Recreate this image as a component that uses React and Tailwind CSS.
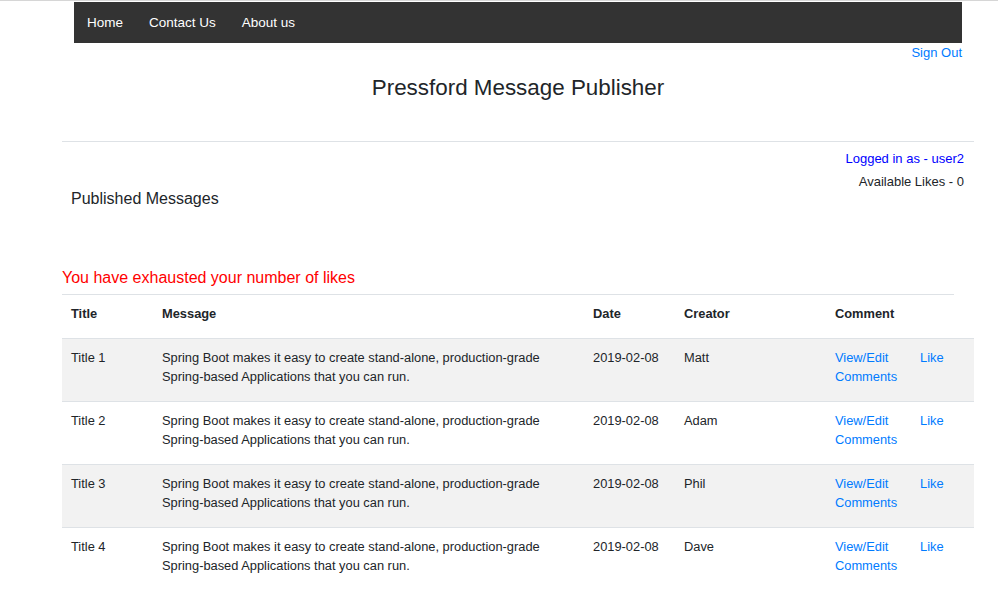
const rows = [
  { title: "Title 1", creator: "Matt" },
  { title: "Title 2", creator: "Adam" },
  { title: "Title 3", creator: "Phil" },
  { title: "Title 4", creator: "Dave" },
];

const message =
  "Spring Boot makes it easy to create stand-alone, production-grade Spring-based Applications that you can run.";

export default function App() {
  return (
    <div className="min-h-screen bg-white font-['Liberation_Sans',Arial,sans-serif] text-[13px] text-[#212529]">
      <div className="h-px bg-[#d6d6d6]" />
      <div className="ml-[62px] w-[912px] pt-px">
        <nav className="mx-3 flex h-[41px] items-center bg-[#333333] text-[13.5px]">
          {["Home", "Contact Us", "About us"].map((item) => (
            <a key={item} href="#" className="px-[13px] leading-[20px] text-white">
              {item}
            </a>
          ))}
        </nav>

        <div className="pr-3 text-right leading-[20px]">
          <a href="#" className="text-[#007bff]">Sign Out</a>
        </div>

        <h1 className="mt-[12px] text-center text-[22.4px] leading-[26px]">Pressford Message Publisher</h1>

        <div className="mt-[40px] h-px bg-[#dee2e6]" />

        <div className="flex items-start justify-between">
          <div className="pl-[9px] pt-[46px] text-[16px] leading-[22px]">Published Messages</div>
          <div className="pr-[10px] pt-[5px] text-right leading-[23px]">
            <div className="text-[#0000ff]">Logged in as - user2</div>
            <div>Available Likes - 0</div>
          </div>
        </div>

        <div className="mt-[57px] text-[16px] leading-[22px] text-[#ff0000]">
          You have exhausted your number of likes
        </div>

        <div className="mt-[5px] h-px w-[892px] bg-[#dee2e6]" />
        <table className="w-[912px] table-fixed border-collapse text-left text-[12.85px] leading-[19px]">
          <colgroup>
            <col className="w-[91px]" />
            <col className="w-[431px]" />
            <col className="w-[91px]" />
            <col className="w-[151px]" />
            <col className="w-[85px]" />
            <col className="w-[63px]" />
          </colgroup>
          <thead>
            <tr className="font-bold">
              <th className="pb-[15px] pl-[9px] pt-[9px] align-top">Title</th>
              <th className="pb-[15px] pl-[9px] pt-[9px] align-top">Message</th>
              <th className="pb-[15px] pl-[9px] pt-[9px] align-top">Date</th>
              <th className="pb-[15px] pl-[9px] pt-[9px] align-top">Creator</th>
              <th className="pb-[15px] pl-[9px] pt-[9px] align-top">Comment</th>
              <th className="pb-[15px] pl-[9px] pt-[9px] align-top"></th>
            </tr>
          </thead>
          <tbody>
            {rows.map((row, i) => (
              <tr key={row.title} className={`border-t border-[#dee2e6] ${i % 2 === 0 ? "bg-[#f2f2f2]" : "bg-white"}`}>
                <td className="pb-[15px] pl-[9px] pt-[9px] align-top">{row.title}</td>
                <td className="pb-[15px] pl-[9px] pt-[9px] align-top">{message}</td>
                <td className="pb-[15px] pl-[9px] pt-[9px] align-top">2019-02-08</td>
                <td className="pb-[15px] pl-[9px] pt-[9px] align-top">{row.creator}</td>
                <td className="pb-[15px] pl-[9px] pt-[9px] align-top">
                  <a href="#" className="text-[#007bff]">View/Edit Comments</a>
                </td>
                <td className="pb-[15px] pl-[9px] pt-[9px] align-top">
                  <a href="#" className="text-[#007bff]">Like</a>
                </td>
              </tr>
            ))}
          </tbody>
        </table>
      </div>
    </div>
  );
}
